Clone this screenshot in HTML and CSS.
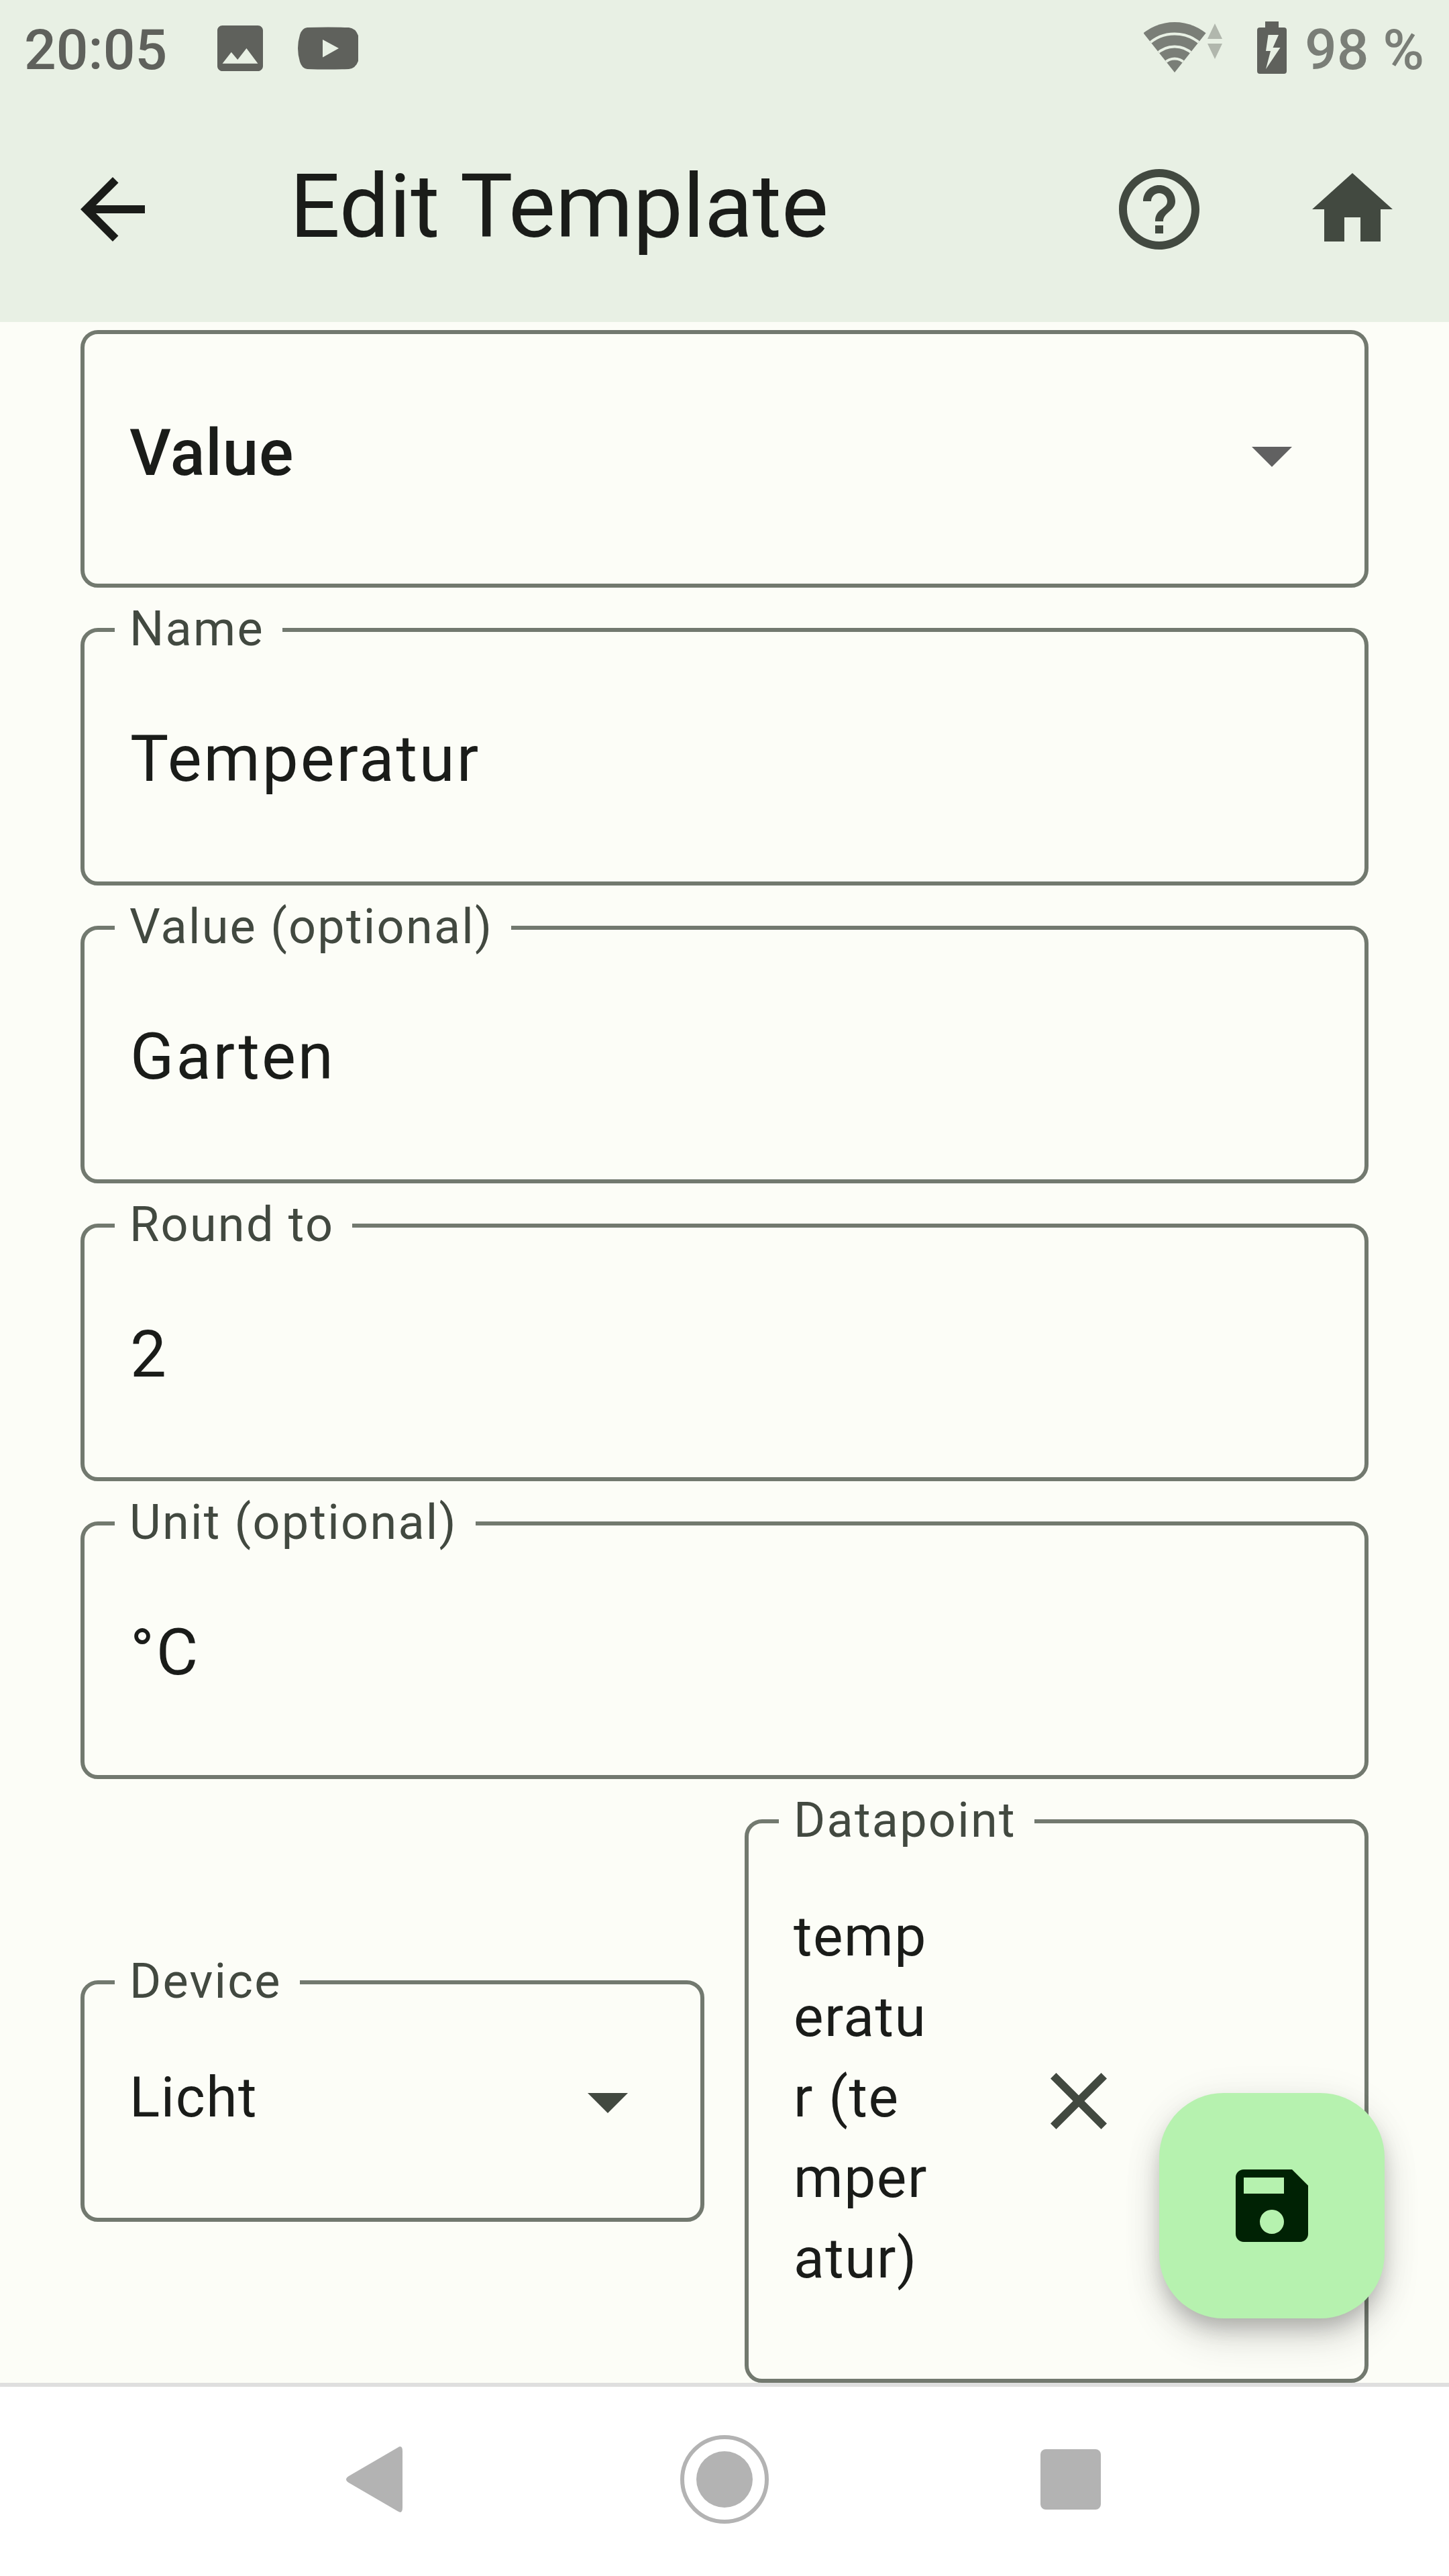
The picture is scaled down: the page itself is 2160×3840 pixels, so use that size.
FILE: index.html
```html
<!DOCTYPE html>
<html lang="en">
<head>
<meta charset="utf-8">
<title>Edit Template</title>
<link rel="stylesheet" href="styles.css">
</head>
<body>
<div class="screen">
  <header class="header">
    <div class="status">
      <div class="status-left">
        <span class="clock">20:05</span>
        <svg class="ic-picture" viewBox="3 3 18 18"><path d="M21 19V5c0-1.1-.9-2-2-2H5c-1.1 0-2 .9-2 2v14c0 1.1.9 2 2 2h14c1.100 0 2-.9 2-2zM8.500 13.500l2.500 3.010L14.500 12l4.500 6H5l3.500-4.500z"/></svg>
        <svg class="ic-video" viewBox="0 0 90 64"><path d="M14 1Q45 0 76 1Q86 2 90 13V51Q86 62 76 63Q45 64 14 63Q6 62 3 52Q0 42 0 32Q0 22 3 12Q6 2 14 1zM37 19v26.500L61 32z"/></svg>
      </div>
      <div class="status-right">
        <svg class="ic-wifi" viewBox="0 0 118 76">
          <defs><clipPath id="fan"><path d="M-4 12L46 75L96 12V-6H-4z"/></clipPath></defs>
          <g clip-path="url(#fan)">
            <circle class="wifi-fill" cx="46" cy="75" r="75"/>
            <circle class="wifi-gap" cx="46" cy="75" r="57.500"/>
            <circle class="wifi-gap" cx="46" cy="75" r="38.500"/>
            <circle class="wifi-gap" cx="46" cy="75" r="20.500"/>
          </g>
          <path class="wifi-traffic" d="M95 25L106 2l11 23zM95 32h22L106 55z"/>
        </svg>
        <svg class="ic-battery" viewBox="0 0 44 78"><path d="M12 0h20v9h8q4 0 4 4v61q0 4-4 4H4q-4 0-4-4V13q0-4 4-4h8zM16.500 20L13 44h7L13 71L34.500 39H23.500L32 20z"/></svg>
        <span class="charge">98 %</span>
      </div>
    </div>
    <div class="appbar">
      <svg class="icon back" viewBox="0 0 24 24"><path d="M20 11H7.830l5.590-5.590L12 4l-8 8 8 8 1.410-1.410L7.830 13H20v-2z"/></svg>
      <h1 class="title">Edit Template</h1>
      <svg class="icon" viewBox="0 0 24 24"><path d="M11 18h2v-2h-2v2zm1-16C6.480 2 2 6.480 2 12s4.480 10 10 10 10-4.480 10-10S17.520 2 12 2zm0 18c-4.410 0-8-3.590-8-8s3.590-8 8-8 8 3.590 8 8-3.590 8-8 8zm0-14c-2.210 0-4 1.790-4 4h2c0-1.100.9-2 2-2s2 .9 2 2c0 2-3 1.750-3 5h2c0-2.250 3-2.500 3-5 0-2.210-1.790-4-4-4z"/></svg>
      <svg class="icon" viewBox="0 0 24 24"><path d="M10 20v-6h4v6h5v-8h3L12 3 2 12h3v8z"/></svg>
    </div>
  </header>

  <main class="form">
    <div class="field select type">
      <span class="value strong">Value</span>
      <svg class="icon arrow" viewBox="0 0 24 24"><path d="M7 10l5 5 5-5z"/></svg>
    </div>
    <div class="field"><label class="label">Name</label><span class="value">Temperatur</span></div>
    <div class="field"><label class="label">Value (optional)</label><span class="value">Garten</span></div>
    <div class="field"><label class="label">Round to</label><span class="value">2</span></div>
    <div class="field"><label class="label">Unit (optional)</label><span class="value">°C</span></div>
    <div class="pair">
      <div class="field select device">
        <label class="label">Device</label>
        <span class="value small">Licht</span>
        <svg class="icon" viewBox="0 0 24 24"><path d="M7 10l5 5 5-5z"/></svg>
      </div>
      <div class="field select datapoint">
        <label class="label">Datapoint</label>
        <span class="value small">temp<br>eratu<br>r (te<br>mper<br>atur)</span>
        <svg class="icon clear" viewBox="0 0 24 24"><path d="M19 6.410L17.590 5 12 10.590 6.410 5 5 6.410 10.590 12 5 17.590 6.410 19 12 13.410 17.590 19 19 17.590 13.410 12z"/></svg>
      </div>
    </div>
    <button class="fab" aria-label="Save">
      <svg class="icon" viewBox="0 0 24 24"><path d="M17 3H5c-1.110 0-2 .9-2 2v14c0 1.100.89 2 2 2h14c1.100 0 2-.9 2-2V7l-4-4zm-5 16c-1.660 0-3-1.340-3-3s1.340-3 3-3 3 1.340 3 3-1.340 3-3 3zm3-10H5V5h10v4z"/></svg>
    </button>
  </main>

  <nav class="navbar">
    <svg class="nav-back" viewBox="0 0 84 98"><path d="M77 1.500Q84-3 84 7V91Q84 101 77 96.500L4 54Q-4 49 4 44z"/></svg>
    <svg class="nav-home" viewBox="0 0 132 132"><circle cx="66" cy="66" r="42"/><circle class="ring" cx="66" cy="66" r="63"/></svg>
    <svg class="nav-recent" viewBox="0 0 90 90"><rect width="90" height="90" rx="8"/></svg>
  </nav>
</div>
</body>
</html>
```
FILE: styles.css
```css
* { box-sizing: border-box; }
body { margin: 0; font-family: Roboto, "Liberation Sans", sans-serif; }
svg { display: block; flex: none; }

.screen {
  width: 2160px;
  height: 3840px;
  display: flex;
  flex-direction: column;
  overflow: hidden;
  background: #fcfdf7;
  color: #1a1c19;
}

/* status bar and app bar */
.header { height: 480px; flex: none; background: #e8f0e4; }
.status {
  height: 144px;
  padding: 0 36px;
  display: flex;
  justify-content: space-between;
  font-size: 84px;
  font-weight: 500;
  line-height: 150px;
  color: #5f615c;
  fill: #5f615c;
}
.status-left, .status-right { display: flex; align-items: flex-start; white-space: nowrap; }
.clock { width: 288px; }
.ic-picture { width: 68px; height: 68px; margin-top: 38px; }
.ic-video { width: 90px; height: 64px; margin: 40px 0 0 52px; }
.ic-wifi { width: 118px; height: 76px; margin: 33px 51px 0 0; }
.wifi-fill { fill: #7a7e77; }
.wifi-gap { fill: none; stroke: #e8f0e4; stroke-width: 4; }
.wifi-traffic { fill: #b1b7ad; }
.ic-battery { width: 44px; height: 78px; margin: 32px 27px 0 0; }
.charge { width: 179px; color: #7a7e77; }

.appbar {
  height: 336px;
  padding: 0 72px 0 96px;
  display: flex;
  align-items: center;
  gap: 144px;
}
.icon { width: 144px; height: 144px; fill: #424940; }
.back { fill: #1a1c19; }
.title {
  flex: 1;
  margin: 0 0 8px 48px;
  font-size: 132px;
  font-weight: 400;
  line-height: 168px;
  white-space: nowrap;
}

/* outlined form fields */
.form {
  position: relative;
  height: 3072px;
  flex: none;
  padding: 12px 120px 0;
  display: flex;
  flex-direction: column;
  gap: 60px;
}
.field {
  position: relative;
  height: 384px;
  flex: none;
  padding: 129px 66px 0 68px;
  border: 6px solid #72796f;
  border-radius: 26px;
}
.label {
  position: absolute;
  left: 45px;
  top: -46px;
  padding: 0 27px 0 22px;
  background: #fcfdf7;
  color: #424940;
  font-size: 72px;
  line-height: 84px;
  letter-spacing: 2.25px;
  white-space: nowrap;
}
.value { display: block; font-size: 96px; line-height: 120px; letter-spacing: 3px; }
.strong { font-weight: 500; letter-spacing: 0.9px; }
.small { font-size: 84px; letter-spacing: 1.5px; }
.select { display: flex; justify-content: space-between; align-items: flex-start; }
.type { padding: 108px 66px 0 67px; }
.type .value { margin-top: 9px; }
.arrow { fill: #616161; }
.pair { display: flex; align-items: center; gap: 60px; }
.device { width: 930px; height: 360px; padding: 102px 66px 0 67px; }
.device .value { margin-top: 7px; }
.datapoint { width: 930px; height: 840px; padding: 109px 66px 0 67px; }
.clear { margin: 233px 288px 0 0; }

.fab {
  position: absolute;
  right: 96px;
  bottom: 96px;
  width: 336px;
  height: 336px;
  padding: 0;
  border: 0;
  border-radius: 96px;
  display: grid;
  place-items: center;
  background: #b6f2af;
  box-shadow: 0 18px 30px -6px rgba(0,0,0,.2), 0 32px 56px rgba(0,0,0,.12), 0 6px 60px rgba(0,0,0,.07);
}
.fab .icon { fill: #002204; }

/* system navigation */
.navbar {
  height: 288px;
  border-top: 6px solid #dfdfdf;
  background: #fff;
  padding: 0 519px 6px 516px;
  display: flex;
  align-items: center;
  justify-content: space-between;
  fill: #b3b3b3;
}
.nav-back { width: 84px; height: 98px; }
.nav-home { width: 132px; height: 132px; margin-left: 9px; }
.nav-recent { width: 90px; height: 90px; }
.ring { fill: none; stroke: #b3b3b3; stroke-width: 6; }
```
